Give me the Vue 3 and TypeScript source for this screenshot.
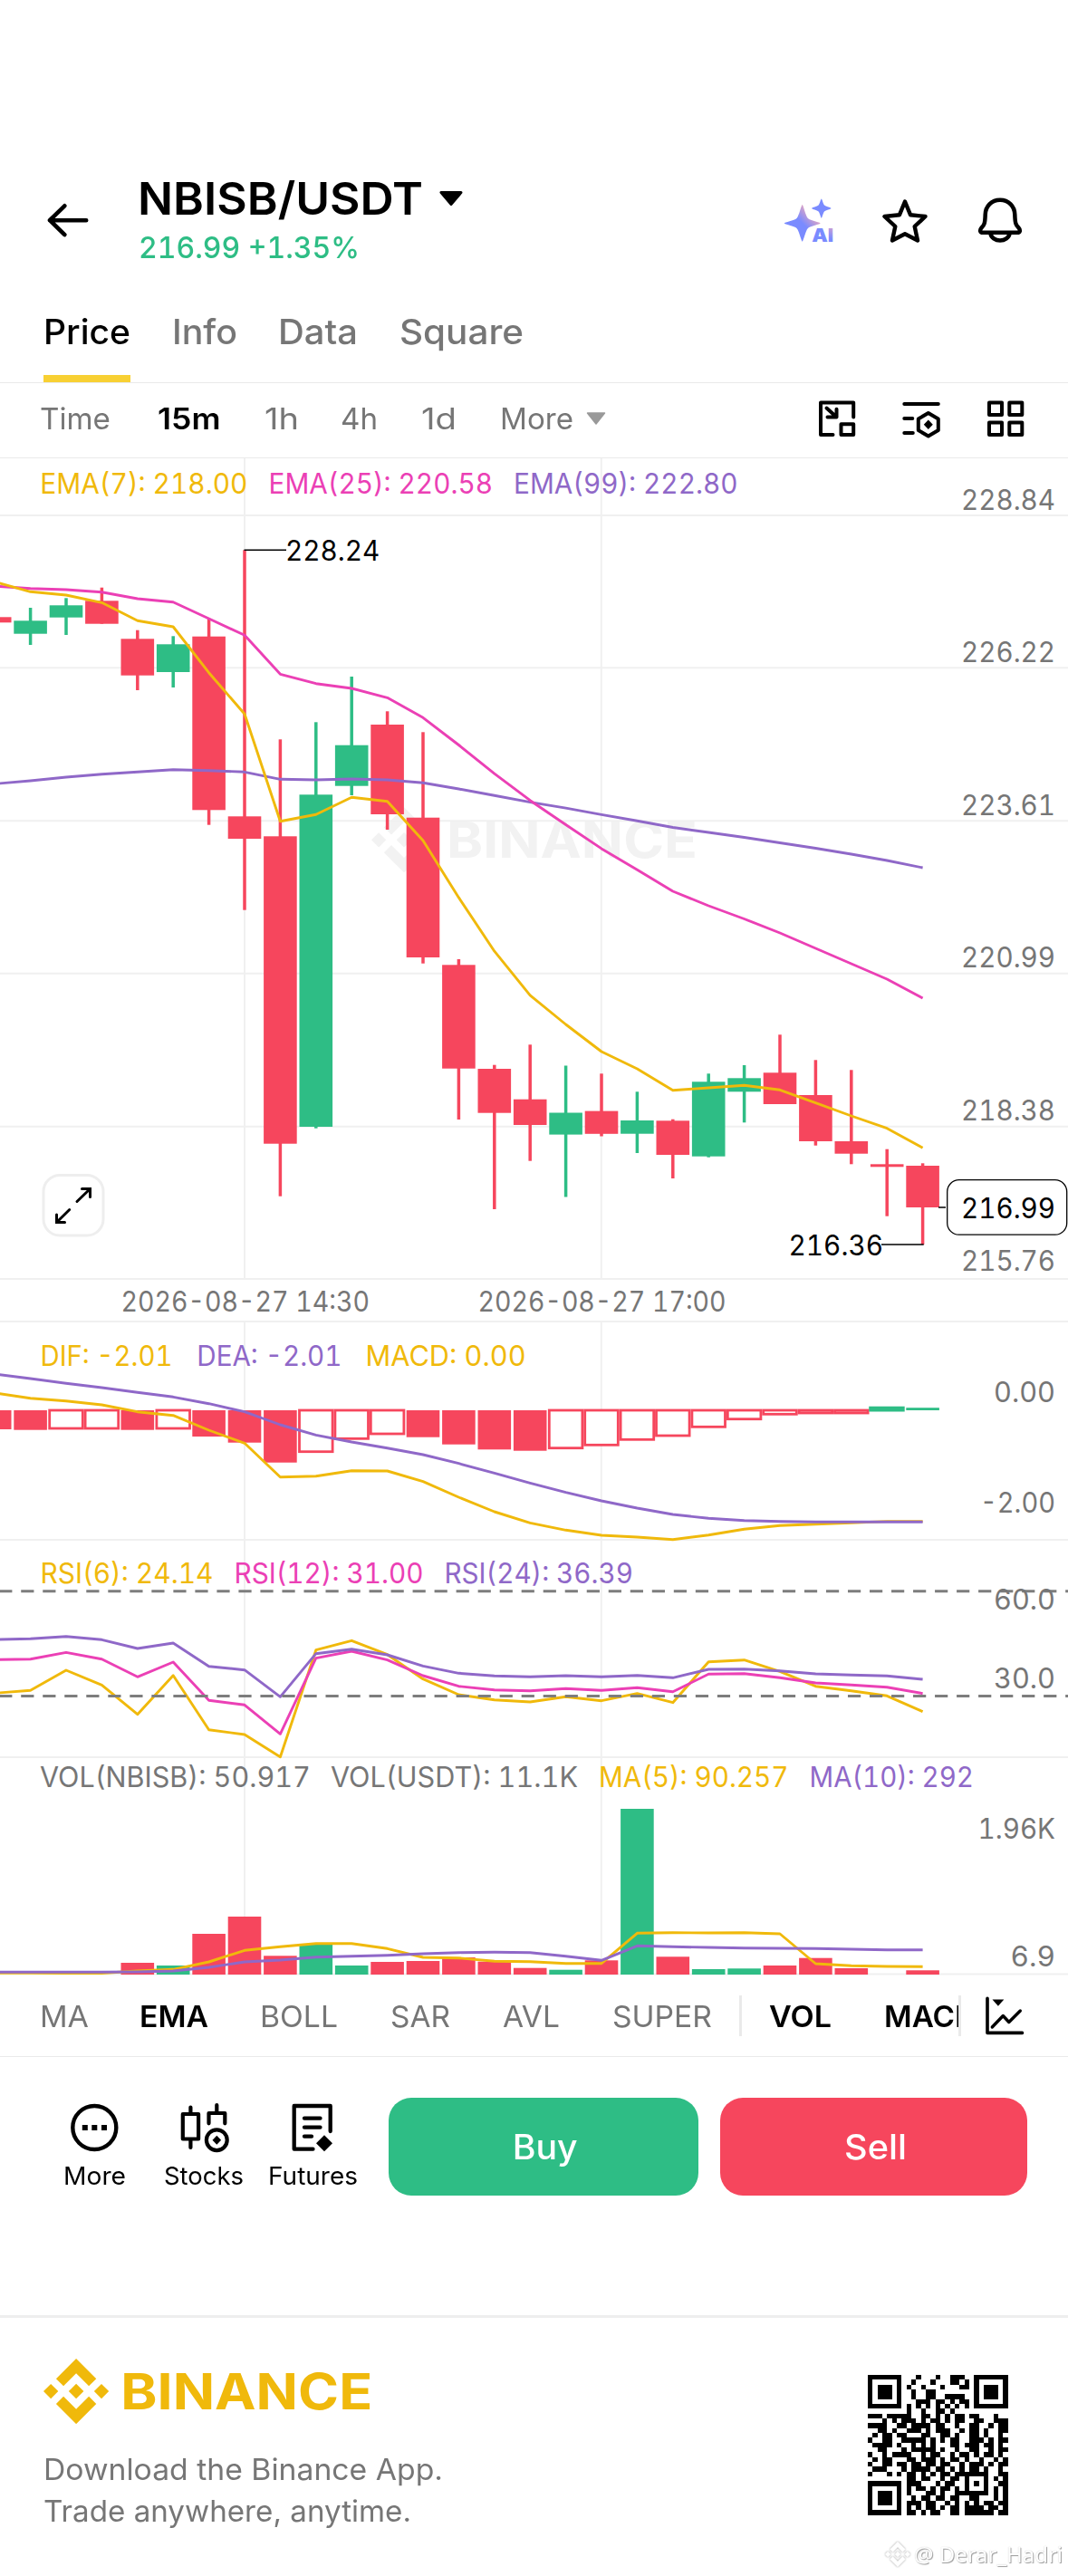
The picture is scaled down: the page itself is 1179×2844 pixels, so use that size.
<script setup lang="ts">
type Candle = [up: 0 | 1, high: number, low: number, top: number, bottom: number]
type Label = { text: string; x1: number; x2: number; y: number; cls: string }

const X0 = 33.6
const STEP = 39.4
const BODY = 36.6
const cx = (i: number) => X0 + STEP * i

// Scales a label horizontally so that it takes exactly the given width.
const vFit = {
  mounted(el: HTMLElement, binding: { value: number }) {
    el.style.display = 'inline-block'
    const natural = el.getBoundingClientRect().width
    el.style.width = `${binding.value}px`
    el.style.transformOrigin = 'left center'
    el.style.transform = `scaleX(${binding.value / natural})`
  },
}

const tabs = [
  { text: 'Price', w: 96, active: true },
  { text: 'Info', w: 72, active: false },
  { text: 'Data', w: 88, active: false },
  { text: 'Square', w: 137, active: false },
]

const intervals = [
  { text: 'Time', step: 129.5, w: 78, active: false },
  { text: '15m', step: 118, w: 69.5, active: true },
  { text: '1h', step: 84.5, w: 38, active: false },
  { text: '4h', step: 89, w: 41, active: false },
  { text: '1d', step: 87, w: 39, active: false },
  { text: 'More', step: 94, w: 81, active: false },
]

const indicators = [
  { text: 'MA', step: 110, w: 54, active: false },
  { text: 'EMA', step: 132.5, w: 76, active: true },
  { text: 'BOLL', step: 144, w: 86, active: false },
  { text: 'SAR', step: 124.5, w: 66, active: false },
  { text: 'AVL', step: 120.5, w: 63, active: false },
  { text: 'SUPER', step: 140.5, w: 110, active: false },
]

const candles: Candle[] = [
  [0, 681.3, 687.3, 681.3, 687.3],
  [1, 671, 712, 685.3, 699.7],
  [1, 660.3, 701, 668.3, 681.7],
  [0, 648.7, 688.7, 663.3, 688.7],
  [0, 695.7, 762, 705.3, 745.7],
  [1, 702.3, 759, 711.3, 742],
  [0, 683.3, 910.7, 702.7, 894.3],
  [0, 607.3, 1004.7, 901.3, 926],
  [0, 816.3, 1320.7, 923.3, 1262.7],
  [1, 797.3, 1245.7, 877.3, 1244],
  [1, 747, 878, 822.7, 867.7],
  [0, 785.3, 916, 800, 899],
  [0, 808.3, 1063.7, 902.7, 1057],
  [0, 1059, 1236, 1065.3, 1179.7],
  [0, 1175.7, 1335, 1180, 1228.7],
  [0, 1153.3, 1281.7, 1213.7, 1242],
  [1, 1176.5, 1321.5, 1228.5, 1252.6],
  [0, 1185.3, 1254.5, 1226.6, 1251.8],
  [1, 1205.3, 1273, 1237, 1251.7],
  [0, 1235.7, 1301, 1237.3, 1275],
  [1, 1185.3, 1277.7, 1194.3, 1276.7],
  [1, 1176, 1239.3, 1190.3, 1205.3],
  [0, 1142.3, 1219, 1184.3, 1219],
  [0, 1170.3, 1264.7, 1209, 1260],
  [0, 1181.3, 1285.3, 1260, 1273.7],
  [0, 1268.7, 1342.7, 1285.3, 1288.3],
  [0, 1284.3, 1374, 1287, 1333],
]

// The first value of each series sits on the left edge, the rest on candle centres.
const line = (ys: number[]) =>
  ys.map((y, k) => `${k === 0 ? -2 : cx(k - 1).toFixed(1)},${y}`).join(' ')

const ema7 = line([643.5, 653.3, 657, 665.3, 685.3, 692, 742.7, 788.3, 906.7, 899.3, 880.3, 884.7, 928, 990.9, 1050.2, 1098.8, 1131, 1161, 1180, 1203.7, 1201, 1198.3, 1203.3, 1217.7, 1232, 1245.7, 1267.3])
const ema25 = line([647.3, 649.7, 651, 653.7, 661, 664.7, 683, 701.3, 744.3, 754.7, 760, 770.3, 792.3, 822.5, 854.2, 883.7, 910.5, 936.9, 960.2, 984, 1000, 1014.5, 1030, 1047, 1064, 1081, 1102])
const ema99 = line([865, 862, 858, 854.7, 852.3, 849.7, 850.7, 852.3, 860.3, 861, 860, 861, 864.3, 871, 878.3, 885.6, 892.1, 899.4, 906.3, 913.5, 919, 924.5, 930.5, 936.5, 943, 950, 958])

const dif = line([1538.5, 1543.7, 1546.7, 1551, 1558.7, 1562.7, 1579, 1593.3, 1630.7, 1629.7, 1623.7, 1624, 1635.7, 1653, 1669, 1681.3, 1689.3, 1695, 1697, 1699.7, 1694.7, 1688.3, 1684.3, 1682.7, 1681.3, 1679.6, 1679.6])
const dea = line([1517.5, 1522, 1527.3, 1532, 1537.3, 1542.3, 1549.7, 1558.7, 1573, 1584.3, 1592, 1598.7, 1606, 1615.7, 1626.3, 1637.3, 1647.7, 1657, 1665, 1672, 1676.3, 1678.7, 1679.7, 1680.3, 1680.3, 1680.3, 1680.3])
// Bottom of each histogram bar; true marks an outlined bar.
const macdBars: [number, boolean][] = [
  [1578, false], [1578.7, false], [1577, true], [1577, true], [1578.7, false], [1577, true],
  [1586, false], [1592.7, false], [1614.7, false], [1602.7, true], [1588.3, true], [1583, true],
  [1586.7, false], [1594.7, false], [1600.3, false], [1601.7, false], [1598.7, true], [1595.3, true],
  [1589.3, true], [1585, true], [1575.3, true], [1566.7, true], [1561.3, true], [1560, true], [1560, true],
]

const rsi6 = line([1869, 1866.3, 1844, 1860.3, 1892.7, 1849.7, 1909.7, 1915, 1939.7, 1821.7, 1811.3, 1826.7, 1853.7, 1871, 1876.7, 1879, 1873.3, 1877.7, 1869.7, 1879.7, 1834.7, 1832.7, 1845.3, 1861.7, 1866.7, 1872.3, 1889.7])
const rsi12 = line([1832.3, 1831.7, 1824.3, 1831.7, 1851.3, 1835, 1877.3, 1882.3, 1914.3, 1830.7, 1823, 1832.7, 1850, 1861.7, 1865.7, 1866.7, 1864.3, 1866.3, 1863.3, 1867.7, 1848.3, 1847.7, 1852.3, 1858, 1860.3, 1862.7, 1869.7])
const rsi24 = line([1810, 1809.3, 1806.7, 1810.3, 1820, 1814, 1839.7, 1843.7, 1873.3, 1825.7, 1820.7, 1827, 1839.3, 1847.3, 1850.3, 1851.3, 1850, 1851.3, 1849.7, 1852.3, 1843, 1842.7, 1844.7, 1848, 1849.3, 1850.3, 1854])

const volumes: [i: number, up: 0 | 1, top: number][] = [
  [3, 0, 2167], [4, 1, 2170], [5, 0, 2135], [6, 0, 2116], [7, 0, 2159.3], [8, 1, 2146.7], [9, 1, 2170],
  [10, 0, 2166], [11, 0, 2165], [12, 0, 2161], [13, 0, 2165.7], [14, 0, 2172.7], [15, 1, 2174.7],
  [16, 0, 2164.3], [17, 1, 1997], [18, 0, 2160.3], [19, 1, 2174], [20, 1, 2173.3], [21, 0, 2170],
  [22, 0, 2161.7], [23, 0, 2173], [25, 0, 2175.3],
]
const ma5 = line([2178.3, 2178.3, 2178.5, 2178.5, 2176, 2174.3, 2166, 2153.3, 2149.3, 2145.7, 2145.7, 2151.3, 2161, 2161.7, 2165.3, 2165.7, 2167.7, 2167.7, 2134.3, 2133.7, 2134, 2133.7, 2135, 2168, 2170.3, 2171, 2171.3])
const ma10 = line([2177.3, 2177.3, 2177.3, 2177.3, 2177, 2176, 2172, 2166, 2164, 2160.7, 2159.7, 2158.7, 2157, 2155.7, 2155.3, 2155.7, 2159.7, 2164.3, 2148.3, 2149.3, 2150, 2150.7, 2151, 2151.3, 2152, 2152.7, 2152.7])

const priceLabels: Label[] = [
  { text: 'EMA(7): 218.00', x1: 46.3, x2: 271.5, y: 545, cls: 'c-yellow' },
  { text: 'EMA(25): 220.58', x1: 298.5, x2: 542, y: 545, cls: 'c-pink' },
  { text: 'EMA(99): 222.80', x1: 569, x2: 812.5, y: 545, cls: 'c-purple' },
  { text: '228.84', x1: 1063, x2: 1163, y: 563, cls: 'c-gray' },
  { text: '226.22', x1: 1063, x2: 1163, y: 731, cls: 'c-gray' },
  { text: '223.61', x1: 1063, x2: 1163, y: 900, cls: 'c-gray' },
  { text: '220.99', x1: 1063, x2: 1163, y: 1068, cls: 'c-gray' },
  { text: '218.38', x1: 1063, x2: 1163, y: 1237, cls: 'c-gray' },
  { text: '215.76', x1: 1063, x2: 1163, y: 1403, cls: 'c-gray' },
  { text: '228.24', x1: 317, x2: 417.3, y: 619, cls: 'c-black' },
  { text: '216.36', x1: 872.5, x2: 973, y: 1386, cls: 'c-black' },
  { text: '2026-08-27 14:30', x1: 135.5, x2: 406, y: 1448, cls: 'c-gray' },
  { text: '2026-08-27 17:00', x1: 529.5, x2: 799.5, y: 1448, cls: 'c-gray' },
]
const macdLabels: Label[] = [
  { text: 'DIF: -2.01', x1: 46.5, x2: 188.5, y: 1508, cls: 'c-yellow' },
  { text: 'DEA: -2.01', x1: 219.3, x2: 375.5, y: 1508, cls: 'c-purple' },
  { text: 'MACD: 0.00', x1: 405.5, x2: 578.6, y: 1508, cls: 'c-yellow' },
  { text: '0.00', x1: 1099, x2: 1163, y: 1547.7, cls: 'c-gray' },
  { text: '-2.00', x1: 1084, x2: 1163, y: 1670, cls: 'c-gray' },
]
const rsiLabels: Label[] = [
  { text: 'RSI(6): 24.14', x1: 46.5, x2: 233.5, y: 1747.5, cls: 'c-yellow' },
  { text: 'RSI(12): 31.00', x1: 260.5, x2: 465.5, y: 1747.5, cls: 'c-pink' },
  { text: 'RSI(24): 36.39', x1: 492.5, x2: 697, y: 1747.5, cls: 'c-purple' },
  { text: '60.0', x1: 1099, x2: 1163, y: 1776.7, cls: 'c-gray' },
  { text: '30.0', x1: 1099, x2: 1163, y: 1863.7, cls: 'c-gray' },
]
const volLabels: Label[] = [
  { text: 'VOL(NBISB): 50.917', x1: 46, x2: 340.8, y: 1973, cls: 'c-gray' },
  { text: 'VOL(USDT): 11.1K', x1: 367, x2: 636, y: 1973, cls: 'c-gray' },
  { text: 'MA(5): 90.257', x1: 663, x2: 868.5, y: 1973, cls: 'c-yellow' },
  { text: 'MA(10): 292', x1: 895.5, x2: 1073, y: 1973, cls: 'c-purple' },
  { text: '1.96K', x1: 1081.5, x2: 1163, y: 2030, cls: 'c-gray' },
  { text: '6.9', x1: 1117.5, x2: 1163, y: 2171, cls: 'c-gray' },
]

const gridRows = [569, 737.3, 906.3, 1074.7, 1243.7, 1412, 1459]

const mark =
  'M38.73 53.2l24.59-24.58 24.6 24.6 14.3-14.31L63.32 0l-38.9 38.9zM0 63.31l14.3-14.31 14.31 14.31-14.31 14.3zM38.73 73.41l24.59 24.59 24.6-24.6 14.31 14.29-38.9 38.91-38.91-38.88zM98 63.31l14.3-14.31 14.31 14.3-14.31 14.32zM77.83 63.3L63.32 48.78 52.59 59.51l-1.24 1.23-2.54 2.54 14.51 14.5 14.51-14.47z'

const qr = [
  '#######...#...#..###..#######',
  '#.....#..#...#...##.#.#.....#',
  '#.###.#.#..#...#...##.#.###.#',
  '#.###.#..#..##........#.###.#',
  '#.###.#..#..##..####..#.###.#',
  '#.....#...###.##.#.##.#.....#',
  '#######.#.#.#.#.#.#.#.#######',
  '........#..#..##.#...........',
  '###.#####..##.#.#.##.##...#..',
  '...#.#.###.#.##.#.##..##..###',
  '####..##.####.##..#..##..#.##',
  '..##.#..###.#.###..#.##.#..##',
  '.#.##.##...##..##.#..##.#..#.',
  '#..##..#####.#.#.##..###.#.##',
  '.####.#..#.#.#...##.###.##.#.',
  '..##...#.#####.#..#..##..#.##',
  '#..#.####..#.##..#.##.#.##.#.',
  '.#.##...##.###.#.##.#..#..#.#',
  '#..##.##.##.##.##..#.###.#.##',
  '.###...#.####.##.#.#.##.#..#.',
  '#...#.#.##.#.#.##.#######..##',
  '........##.##..#.##.#...#.#.#',
  '#######.###...#.##..#.#.#..##',
  '#.....#.#.##.#.##.#.#...#.#.#',
  '#.###.#.#...##.#..#######.#.#',
  '#.###.#..#.##.##.##..##...#.#',
  '#.###.#.###.##..#.#.#.#.##.##',
  '#.....#.#.#.##.#.##.####.##.#',
  '#######.##.#.##..##.######.##',
]
const qrPath = qr
  .flatMap((row, y) => [...row].map((c, x) => (c === '#' ? `M${x} ${y}h1v1h-1z` : '')))
  .join('')
</script>

<template>
  <div class="screen">
    <header class="header">
      <svg class="i60" viewBox="45 213.5 60 60">
        <path class="s" d="M95.2 242.7H55M71.3 226.8L55 242.7l16.3 15.9" stroke-width="4.6" />
      </svg>
      <div class="pair">
        <div class="pair-name">
          <span v-fit="315">NBISB/USDT</span>
          <svg width="28" height="18" viewBox="0 0 28 18"><path d="M3 2.5h22L14 15.5z" stroke="#000" stroke-width="3" stroke-linejoin="round" /></svg>
        </div>
        <div class="pair-price"><span v-fit="244">216.99 +1.35%</span></div>
      </div>
      <div class="actions">
        <svg class="i60" viewBox="862 213.5 60 60">
          <defs>
            <linearGradient id="ai" x1="0" y1="1" x2="1" y2="0">
              <stop offset="0.5" stop-color="#7a8bff" />
              <stop offset="0.75" stop-color="#d9a3c8" />
            </linearGradient>
            <linearGradient id="ait" x1="0" y1="1" x2="1" y2="0">
              <stop offset="0.6" stop-color="#7a8bff" />
              <stop offset="1" stop-color="#f2a9bd" />
            </linearGradient>
          </defs>
          <path d="M885.7 225.5c1 0 3.700 12.500 6.200 15s13.700 4.400 13.700 5.500-11.200 3-13.700 5.500-5.200 14.700-6.200 14.700-3.700-12.200-6.200-14.700-13.700-4.400-13.700-5.500 11.200-3 13.700-5.500 5.200-15 6.200-15z" fill="url(#ai)" />
          <path d="M906.800 219c.8 0 1.800 5.600 3.200 7s7.400 2.500 7.400 3.500-6 2.100-7.400 3.500-2.400 7.200-3.200 7.200-1.800-5.800-3.200-7.200-7.400-2.500-7.400-3.500 6-2.100 7.400-3.500 2.400-7 3.200-7z" fill="#7a8bff" />
          <text class="ai-text" x="896.3" y="266" textLength="24" lengthAdjust="spacingAndGlyphs" fill="url(#ait)">AI</text>
        </svg>
        <svg class="i60" viewBox="968 213.5 60 60">
          <path class="s" d="M999 222l6 14.700 16.500 1.800-11.800 11 3.300 15.500-14-7.300-14 7.300 3.300-15.500-11.800-11 16.500-1.800z" stroke-width="4.400" />
        </svg>
        <svg class="i60" viewBox="1074 213.5 60 60">
          <path class="s" d="M1104 220.200c-9.500 0-16 7-16.300 16-.3 10-1 11.300-4.200 14.800-2.200 2.500-1.700 5.300 1.500 5.300h38c3.200 0 3.700-2.800 1.500-5.300-3.200-3.500-3.900-4.800-4.200-14.800-.3-9-6.800-16-16.300-16z" stroke-width="4.500" />
          <path class="s" d="M1093.500 257.500a10.600 8.600 0 0 0 21 0" stroke-width="4.500" />
        </svg>
      </div>
    </header>

    <nav class="tabs">
      <span v-for="t in tabs" :key="t.text" class="tab" :class="{ active: t.active }" :style="{ width: t.w + 'px' }"><span v-fit="t.w">{{ t.text }}</span></span>
    </nav>

    <div class="intervals">
      <span v-for="t in intervals" :key="t.text" class="opt" :class="{ active: t.active }" :style="{ width: t.step + 'px' }"><span v-fit="t.w">{{ t.text }}</span></span>
      <svg width="24" height="16" viewBox="0 0 24 16"><path d="M2.500 2h19L12 14z" fill="#999" stroke="#999" stroke-width="1.500" stroke-linejoin="round" /></svg>
      <svg class="tools" width="234" height="48" viewBox="900 437 234 48">
        <g class="s" stroke-width="4">
          <path d="M942.200 459.500V443.400H906V479h13.500" />
          <path d="M928.500 467.300h13.700V479h-13.700zM912.500 449.500l11 10M923.500 450.800v8.700h-10" />
          <path d="M998.300 445h37.500M998.300 461h9M998.300 477h9.500" />
          <path d="M1024.800 455l11 6.400v12.700l-11 6.400-11-6.400v-12.700z" />
          <path d="M1092 443.400h14v13.500h-14zM1114.300 443.400h14v13.500h-14zM1092 465.400h14V479h-14zM1114.300 465.400h14V479h-14z" />
        </g>
        <path d="M1024.800 462.500l5 5.200-5 5.200-5-5.200z" />
      </svg>
    </div>

    <svg class="chart" width="1179" height="953" viewBox="0 506 1179 953">
      <g class="watermark">
        <path :d="mark" transform="translate(410 891.3) scale(.5687)" />
        <text x="493" y="947" textLength="277" lengthAdjust="spacingAndGlyphs">BINANCE</text>
      </g>
      <path v-for="y in gridRows" :key="y" class="grid" :d="`M0 ${y}H1179`" />
      <path class="grid" d="M270 506V1412M663.800 506V1412" />
      <g v-for="(c, k) in candles" :key="k" :class="c[0] ? 'up' : 'down'">
        <rect :x="cx(k - 1) - 1.750" :y="c[1]" width="3.500" :height="c[2] - c[1]" />
        <rect :x="cx(k - 1) - BODY / 2" :y="c[3]" :width="BODY" :height="c[4] - c[3]" />
      </g>
      <polyline class="l purple" :points="ema99" />
      <polyline class="l pink" :points="ema25" />
      <polyline class="l yellow" :points="ema7" />
      <path class="call" d="M269.500 607.300H316M973 1374h46.700" />
      <path class="call" d="M1036 1333h8" />
      <rect x="1045.700" y="1302.700" width="132" height="60.500" rx="13" fill="#fff" stroke="#000" stroke-width="1.300" />
      <text class="t c-black" x="1061" y="1345" textLength="104" lengthAdjust="spacingAndGlyphs">216.99</text>
      <rect x="48" y="1297.500" width="66" height="66.500" rx="18" fill="#fff" stroke="#eee" stroke-width="3" />
      <path d="M85 1326.500L99.500 1312.500M90.500 1312.500H99.500V1321.500M76.700 1335.500L62.500 1349.500M62.500 1341V1349.500H71.500" fill="none" stroke="#000" stroke-width="3" stroke-linecap="round" />
      <text v-for="l in priceLabels" :key="l.text" class="t" :class="l.cls" :x="l.x1 - 2" :y="l.y" :textLength="l.x2 - l.x1 + 4" lengthAdjust="spacingAndGlyphs">{{ l.text }}</text>
    </svg>

    <svg class="chart" width="1179" height="241" viewBox="0 1459 1179 241">
      <path class="grid" d="M270 1459V1700M663.800 1459V1700M0 1700H1179" />
      <g v-for="(b, k) in macdBars" :key="k">
        <rect v-if="b[1]" class="hollow" :x="cx(k - 1) - BODY / 2" y="1557" :width="BODY" :height="b[0] - 1557" />
        <rect v-else class="down" :x="cx(k - 1) - BODY / 2" y="1557" :width="BODY" :height="b[0] - 1557" />
      </g>
      <rect class="up" :x="cx(24) - 20" y="1552.700" width="39.500" height="5.800" />
      <rect class="up" :x="cx(25) - BODY / 2" y="1554.200" :width="BODY" height="2.800" />
      <polyline class="l yellow" :points="dif" />
      <polyline class="l purple" :points="dea" />
      <text v-for="l in macdLabels" :key="l.text" class="t" :class="l.cls" :x="l.x1 - 2" :y="l.y" :textLength="l.x2 - l.x1 + 4" lengthAdjust="spacingAndGlyphs">{{ l.text }}</text>
    </svg>

    <svg class="chart" width="1179" height="240" viewBox="0 1700 1179 240">
      <path class="grid" d="M270 1700V1940M663.800 1700V1940M0 1940H1179" />
      <polyline class="l yellow" :points="rsi6" />
      <polyline class="l pink" :points="rsi12" />
      <polyline class="l purple" :points="rsi24" />
      <path class="dash" d="M-.8 1756.800H1179M-.8 1872.500H1179" />
      <text v-for="l in rsiLabels" :key="l.text" class="t" :class="l.cls" :x="l.x1 - 2" :y="l.y" :textLength="l.x2 - l.x1 + 4" lengthAdjust="spacingAndGlyphs">{{ l.text }}</text>
    </svg>

    <svg class="chart" width="1179" height="241" viewBox="0 1940 1179 241">
      <path class="grid" d="M270 1940V2180M663.800 1940V2180M0 2179.500H1179" />
      <rect v-for="v in volumes" :key="v[0]" :class="v[1] ? 'up' : 'down'" :x="cx(v[0]) - BODY / 2" :y="v[2]" :width="BODY" :height="2180 - v[2]" />
      <polyline class="l yellow" :points="ma5" />
      <polyline class="l purple" :points="ma10" />
      <text v-for="l in volLabels" :key="l.text" class="t" :class="l.cls" :x="l.x1 - 2" :y="l.y" :textLength="l.x2 - l.x1 + 4" lengthAdjust="spacingAndGlyphs">{{ l.text }}</text>
    </svg>

    <div class="indicators">
      <span v-for="t in indicators" :key="t.text" class="opt" :class="{ active: t.active }" :style="{ width: t.step + 'px' }"><span v-fit="t.w">{{ t.text }}</span></span>
      <i class="divider"></i>
      <div class="subs">
        <span class="opt active sub"><span v-fit="69">VOL</span></span>
        <span class="opt active"><span v-fit="102">MACD</span></span>
      </div>
      <i class="divider"></i>
      <svg class="ind-icon" width="50" height="50" viewBox="1085 2200.500 50 50">
        <path class="s" d="M1091 2205.800V2243.900H1129.500" stroke-width="3.600" />
        <path class="s" d="M1096.300 2237.500l12-12.500 6.500 7 12.500-12.500" stroke-width="3.400" />
        <path d="M1096.500 2207h12.800l-6.400 7.300z" />
      </svg>
    </div>

    <div class="trade">
      <div class="quick">
        <svg width="62" height="62" viewBox="73.500 2318 62 62">
          <circle class="s" cx="104.800" cy="2349" r="24" stroke-width="4.400" />
          <path d="M91.300 2346h6v6h-6zM101.800 2346h6v6h-6zM112.500 2346h6v6h-6z" />
        </svg>
        <span v-fit="69">More</span>
      </div>
      <div class="quick">
        <svg width="62" height="62" viewBox="193.500 2318 62 62">
          <g class="s" stroke-width="4.200">
            <path d="M201.300 2334h17.300v27.500h-17.300zM209.900 2326.500v7M209.900 2362v9M238.800 2324v7M230 2344.300V2333h17.800v11.300" />
            <circle cx="238.800" cy="2362.700" r="11.400" />
          </g>
          <path d="M238.800 2357.700l4.800 5-4.800 5-4.800-5z" />
        </svg>
        <span v-fit="88">Stocks</span>
      </div>
      <div class="quick">
        <svg width="62" height="62" viewBox="314 2318 62 62">
          <path class="s" d="M364.700 2353V2325H324.700V2372.700H345.500M336 2338.700h17.500M336 2348.700h17.500M336 2358.700h8" stroke-width="4.300" />
          <path d="M358 2357.300l9 9-9 9-9-9z" />
        </svg>
        <span v-fit="99">Futures</span>
      </div>
      <button class="btn buy"><span v-fit="72">Buy</span></button>
      <button class="btn sell"><span v-fit="69">Sell</span></button>
    </div>

    <footer class="footer">
      <div class="brand">
        <svg width="366" height="72" viewBox="47.800 2604 366 72" class="logo">
          <path :d="mark" transform="translate(47.800 2604) scale(.5700)" fill="#f0b90b" />
          <text x="133" y="2659.500" textLength="278" lengthAdjust="spacingAndGlyphs" fill="#f0b90b">BINANCE</text>
        </svg>
        <p><span v-fit="441">Download the Binance App.</span></p>
        <p><span v-fit="406">Trade anywhere, anytime.</span></p>
      </div>
      <svg class="qr" width="154.670" height="154.670" viewBox="0 0 29 29" shape-rendering="crispEdges"><path :d="qrPath" /></svg>
      <div class="credit">
        <svg width="28" height="28" viewBox="0 0 126.610 126.610"><path :d="mark" fill="#fff" /></svg>
        <span v-fit="164">@ Derar_Hadri</span>
      </div>
    </footer>
  </div>
</template>

<style>
body {
  background: #fff;
}
</style>

<style scoped>
.screen {
  width: 1179px;
  height: 2844px;
  padding-top: 170px;
  box-sizing: border-box;
  background: #fff;
  color: #000;
  font-family: Inter, 'Liberation Sans', sans-serif;
  white-space: nowrap;
  overflow: hidden;
}
svg {
  display: block;
  flex: none;
}
.s {
  fill: none;
  stroke: #000;
  stroke-linecap: round;
  stroke-linejoin: round;
}
.i60 {
  width: 60px;
  height: 60px;
}
.header {
  display: flex;
  align-items: center;
  height: 147px;
  padding: 0 45px;
}
.pair {
  margin-left: 47px;
}
.pair-name {
  display: flex;
  align-items: center;
  gap: 17px;
  font-size: 50px;
  line-height: 58px;
  font-weight: 600;
}
.pair-price {
  padding-left: 1px;
  font-size: 33px;
  line-height: 50px;
  font-weight: 500;
  font-feature-settings: 'tnum';
  color: #2ebd85;
}
.actions {
  display: flex;
  gap: 46px;
  margin-left: auto;
}
.ai-text {
  font: 900 20px Inter, sans-serif;
}
.tabs {
  display: flex;
  gap: 45.500px;
  height: 105px;
  padding-left: 48px;
  border-bottom: 1px solid #eaeaea;
}
.tab {
  box-sizing: border-box;
  height: 105px;
  border-bottom: 8px solid transparent;
  font-size: 37.500px;
  line-height: 99px;
  font-weight: 500;
  color: #767676;
}
.tab.active {
  color: #000;
  border-color: #f8d033;
}
.intervals {
  display: flex;
  align-items: center;
  height: 77px;
  padding: 0 45px 5px 44px;
  border-bottom: 1px solid #eaeaea;
}
.opt {
  font-size: 33px;
  color: #767676;
}
.opt.active {
  color: #000;
  font-weight: 600;
}
.tools {
  margin-left: auto;
}
.chart {
  overflow: visible;
}
.grid {
  fill: none;
  stroke: #f0f0f0;
  stroke-width: 2;
}
.watermark {
  fill: #f2f2f2;
}
.watermark text,
.logo text {
  font: 700 54.500px Inter, sans-serif;
}
.up {
  fill: #2ebd85;
}
.down {
  fill: #f6465d;
}
.hollow {
  fill: #fff;
  stroke: #f6465d;
  stroke-width: 2.800;
}
.l {
  fill: none;
  stroke-width: 2.900;
  stroke-linejoin: round;
}
.yellow {
  stroke: #f0b90b;
}
.pink {
  stroke: #eb40b5;
}
.purple {
  stroke: #8f68c8;
}
.dash {
  fill: none;
  stroke: #7d7d7d;
  stroke-width: 3;
  stroke-dasharray: 14.200 9.820;
}
.call {
  fill: none;
  stroke: #000;
  stroke-width: 1.500;
}
.t {
  font: 400 30.500px Inter, sans-serif;
  font-feature-settings: 'tnum';
}
.c-yellow {
  fill: #f0b90b;
}
.c-pink {
  fill: #eb40b5;
}
.c-purple {
  fill: #8f68c8;
}
.c-gray {
  fill: #767676;
}
.c-black {
  fill: #000;
}
.indicators {
  display: flex;
  align-items: center;
  height: 89px;
  padding-left: 44px;
  border-bottom: 1px solid #eaeaea;
}
.divider {
  flex: none;
  width: 3px;
  height: 45px;
  background: #eaeaea;
}
.subs {
  display: flex;
  box-sizing: border-box;
  width: 239px;
  padding-left: 30px;
  overflow: hidden;
}
.sub {
  flex: none;
  width: 127px;
}
.ind-icon {
  margin-left: 23px;
}
.trade {
  display: flex;
  align-items: flex-start;
  height: 240px;
  padding: 45px 0 0 44px;
}
.quick {
  display: flex;
  flex-direction: column;
  align-items: center;
  width: 120.500px;
  padding-top: 2px;
  font-size: 27.500px;
  line-height: 45px;
}
.btn {
  width: 342px;
  height: 108px;
  margin-left: 23.500px;
  padding: 0;
  border: 0;
  border-radius: 25px;
  background: #2ebd85;
  color: #fff;
  font: 500 37.500px Inter, sans-serif;
}
.btn.sell {
  width: 339px;
  margin-left: 24px;
  background: #f6465d;
}
.footer {
  position: relative;
  display: flex;
  justify-content: space-between;
  height: 285px;
  border-top: 3px solid #eee;
}
.brand {
  padding: 45px 0 0 47.800px;
}
.logo {
  margin-bottom: 27px;
}
.brand p {
  margin: 0;
  font-size: 33px;
  line-height: 46px;
  color: #767676;
}
.qr {
  margin: 63px 66.500px 0 0;
}
.credit {
  position: absolute;
  right: 6px;
  bottom: 7px;
  display: flex;
  align-items: center;
  gap: 4px;
  color: #fff;
  font: 23px/34px 'Noto Sans', sans-serif;
  text-shadow: 1px 1px 1px #999, 0 0 1px #bbb;
}
.credit svg {
  filter: drop-shadow(0 0 1px #999);
}
</style>
